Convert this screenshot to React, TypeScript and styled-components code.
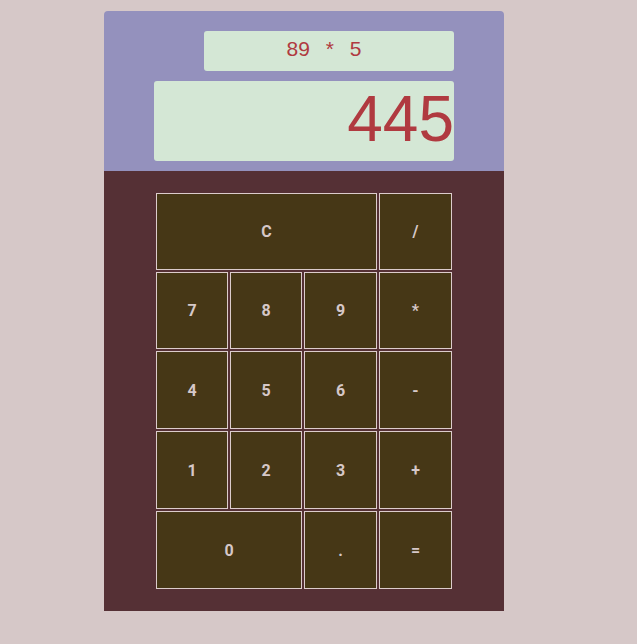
import React from "react";
import styled, { createGlobalStyle } from "styled-components";

const Global = createGlobalStyle`
  html, body { margin: 0; padding: 0; background: #d6c8c8; }
  body { font-family: "Liberation Sans", Arial, sans-serif; }
  #root { padding-top: 11px; }
`;

const Calculator = styled.div`
  width: 400px;
  margin-left: 104px;
  border-radius: 4px 4px 0 0;
  overflow: hidden;
`;

const Display = styled.div`
  background: #9491bd;
  height: 160px;
  box-sizing: border-box;
  padding: 20px 50px 10px 50px;
  display: flex;
  flex-direction: column;
  align-items: flex-end;
  gap: 10px;
`;

const Expression = styled.div`
  width: 250px;
  height: 40px;
  box-sizing: border-box;
  padding-right: 10px;
  border-radius: 3px;
  background: #d4e7d5;
  color: #b03a40;
  font-family: "Liberation Sans", Arial, sans-serif;
  font-size: 21px;
  line-height: 36px;
  text-align: center;
  word-spacing: 10px;
  white-space: pre;
`;

const Result = styled.div`
  width: 300px;
  height: 80px;
  border-radius: 3px;
  background: #d4e7d5;
  color: #b03a40;
  font-family: "Liberation Sans", Arial, sans-serif;
  font-size: 64px;
  line-height: 76px;
  text-align: right;
  overflow: hidden;
  white-space: nowrap;
`;

const Pad = styled.div`
  background: #553035;
  height: 440px;
  box-sizing: border-box;
  padding: 22px 52px;
`;

const Keys = styled.div`
  display: grid;
  grid-template-columns: 72px 72px 73px 73px;
  grid-template-rows: 77px 77px 78px 78px 78px;
  gap: 2px;
  width: 296px;
`;

const Key = styled.button<{ $span?: number }>`
  grid-column: span ${(p) => p.$span ?? 1};
  margin: 0;
  padding: 0;
  background: #463716;
  border: 1px solid #dccccc;
  color: #d6c8c8;
  font-family: Roboto, "Liberation Sans", sans-serif;
  font-weight: 700;
  font-size: 16px;
  cursor: pointer;
`;

const keys: { label: string; span?: number }[] = [
  { label: "C", span: 3 },
  { label: "/" },
  { label: "7" },
  { label: "8" },
  { label: "9" },
  { label: "*" },
  { label: "4" },
  { label: "5" },
  { label: "6" },
  { label: "-" },
  { label: "1" },
  { label: "2" },
  { label: "3" },
  { label: "+" },
  { label: "0", span: 2 },
  { label: "." },
  { label: "=" },
];

export default function App() {
  return (
    <>
      <Global />
      <Calculator>
        <Display>
          <Expression>89 * 5</Expression>
          <Result>445</Result>
        </Display>
        <Pad>
          <Keys>
            {keys.map((k) => (
              <Key key={k.label} $span={k.span}>
                {k.label}
              </Key>
            ))}
          </Keys>
        </Pad>
      </Calculator>
    </>
  );
}
